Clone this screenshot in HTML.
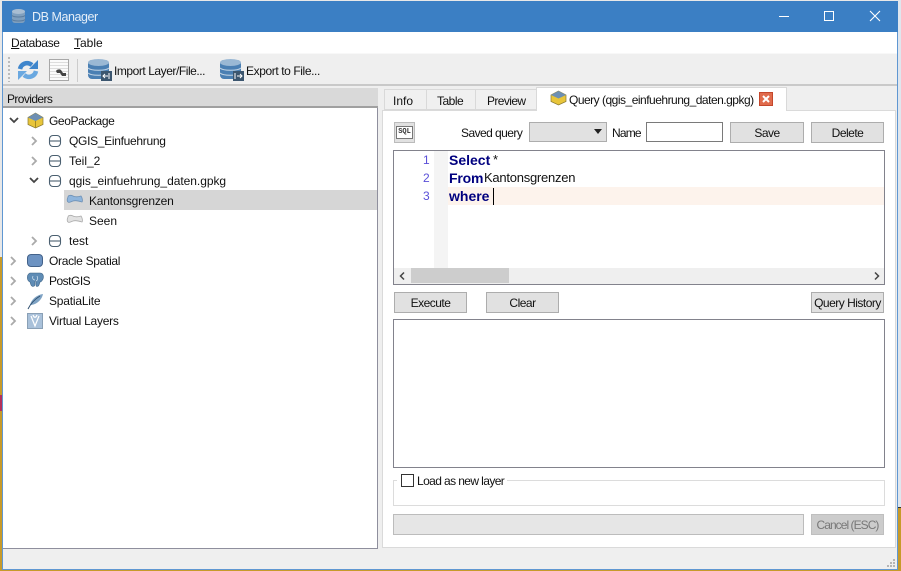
<!DOCTYPE html>
<html><head><meta charset="utf-8">
<style>
html,body{margin:0;padding:0;width:901px;height:571px;overflow:hidden;background:#c79a2a}
*{box-sizing:border-box}
.a{position:absolute}
.t{position:absolute;font:12px/16px "Liberation Sans",sans-serif;color:#111;white-space:nowrap}
.b{position:absolute;background:#e1e1e1;border:1px solid #adadad;font:12px "Liberation Sans",sans-serif;color:#111;text-align:center;white-space:nowrap;letter-spacing:-.5px}
u{text-decoration:underline}
svg{position:absolute;overflow:visible}
</style></head>
<body>
<div class="a" style="left:0;top:0;width:901px;height:257px;background:#e8e8e8"></div>
<div class="a" style="left:0;top:395px;width:2px;height:16px;background:#b5305a"></div>
<div class="a" style="left:898px;top:0;width:3px;height:507px;background:#dfe6ee"></div>
<div class="a" style="left:898px;top:507px;width:3px;height:1px;background:#333"></div>
<!-- window -->
<div class="a" style="left:2px;top:1px;width:896px;height:569px;background:#efefef;border:1px solid #5f97d2;overflow:hidden"></div>
<div class="a" style="left:2px;top:1px;width:896px;height:31px;background:#3b7fc4"></div>
<svg style="left:11px;top:8px" width="16" height="17" viewBox="0 0 16 17"><rect x="1" y="2" width="13" height="13" rx="3" fill="#7f9fbe"/><ellipse cx="7.500" cy="3.500" rx="6.500" ry="2.500" fill="#a8bdd2"/><path d="M1 7.500c2 2 11 2 13 0M1 11.500c2 2 11 2 13 0" stroke="#5b7c9e" fill="none"/></svg>
<div class="t" style="left:32px;top:9px;color:#e6eff8;font-size:12.500px;letter-spacing:-.45px">DB Manager</div>
<div class="a" style="left:779px;top:16px;width:10px;height:1px;background:#fff"></div>
<div class="a" style="left:824px;top:11px;width:10px;height:10px;border:1px solid #fff"></div>
<svg style="left:870px;top:11px" width="10" height="10"><path d="M0 0L10 10M10 0L0 10" stroke="#fff" stroke-width="1.100"/></svg>
<!-- menu -->
<div class="a" style="left:3px;top:32px;width:894px;height:21px;background:#fff"></div>
<div class="a" style="left:3px;top:53px;width:894px;height:33px;background:#efefef;border-top:1px solid #f8f8f8;border-bottom:2px solid #c9c9c9"></div>
<div class="t" style="left:11px;top:35px;letter-spacing:-.35px"><u>D</u>atabase</div>
<div class="t" style="left:74px;top:35px"><u>T</u>able</div>
<!-- toolbar -->
<div class="a" style="left:8px;top:57px;width:2px;height:25px;background-image:linear-gradient(#bbb 50%,transparent 50%);background-size:2px 4px"></div>
<svg style="left:17px;top:59px" width="22" height="22" viewBox="0 0 22 22" fill="none"><path d="M3 10C4 5 10 2 15 6" stroke="#3f86cc" stroke-width="4.500"/><path d="M21 1v9h-9z" fill="#3f86cc"/><path d="M19 12C18 17 12 20 7 16" stroke="#6aa8e0" stroke-width="4.500"/><path d="M1 21v-9h9z" fill="#6aa8e0"/></svg>
<div class="a" style="left:49px;top:59px;width:20px;height:22px;background:#fbfbfb;border:1px solid #a8a8a8;background-image:repeating-linear-gradient(#fbfbfb 0 2px,#ddd 2px 3px)"></div>
<svg style="left:55px;top:68px" width="13" height="11"><path d="M1 3c1-2 4-2 5-1l2 3h3v3H7L5 5H2z" fill="#444"/></svg>
<div class="a" style="left:77px;top:59px;width:1px;height:23px;background:#ccc"></div>
<svg style="left:87px;top:58px" width="26" height="24" viewBox="0 0 26 24"><rect x="1" y="2" width="21" height="19" rx="4" fill="#4a7fb3"/><ellipse cx="11.500" cy="4.500" rx="10.500" ry="3.500" fill="#9ab8d4"/><path d="M1 10c3 3 18 3 21 0M1 15c3 3 18 3 21 0" stroke="#c5d6e6" fill="none"/><rect x="14" y="13" width="11" height="10" fill="#3c566f"/><path d="M16 18h5M18 16l-2 2 2 2M22 15v6" stroke="#fff" fill="none"/></svg>
<div class="t" style="left:114px;top:63px;letter-spacing:-.45px">Import Layer/File...</div>
<svg style="left:219px;top:58px" width="26" height="24" viewBox="0 0 26 24"><rect x="1" y="2" width="21" height="19" rx="4" fill="#4a7fb3"/><ellipse cx="11.500" cy="4.500" rx="10.500" ry="3.500" fill="#9ab8d4"/><path d="M1 10c3 3 18 3 21 0M1 15c3 3 18 3 21 0" stroke="#c5d6e6" fill="none"/><rect x="14" y="13" width="11" height="10" fill="#3c566f"/><path d="M16 15v6M18 18h5M21 16l2 2-2 2" stroke="#fff" fill="none"/></svg>
<div class="t" style="left:246px;top:63px;letter-spacing:-.4px">Export to File...</div>
<!-- Providers -->
<div class="a" style="left:3px;top:88px;width:375px;height:20px;background:#d9d9d9;border-bottom:2px solid #a0a0a0"></div>
<div class="t" style="left:7px;top:91px;letter-spacing:-.6px">Providers</div>
<div class="a" style="left:3px;top:108px;width:375px;height:441px;background:#fff;border-right:1px solid #8f8f9d;border-bottom:1px solid #8f8f9d"></div>
<div class="a" style="left:64px;top:190px;width:313px;height:20px;background:#d6d6d6"></div>
<!-- tree arrows -->
<svg style="left:0;top:0" width="60" height="340" fill="none" stroke-width="1.800">
<path d="M10 118l4 4 4-4M30 178l4 4 4-4" stroke="#444"/>
<path d="M32 137l4 4-4 4M32 157l4 4-4 4M32 237l4 4-4 4M11 257l4 4-4 4M11 277l4 4-4 4M11 297l4 4-4 4M11 317l4 4-4 4" stroke="#aaa"/>
</svg>
<!-- geopackage icon -->
<svg style="left:27px;top:112px" width="17" height="17" viewBox="0 0 17 17"><path d="M8.500 1L16 5.500v7L8.500 16 1 12.500v-7z" fill="#e8c53a" stroke="#8a7a30" stroke-width=".7"/><path d="M1 5.500L8.500 1 16 5.500 8.500 9z" fill="#6d8fb3"/><path d="M8.500 9v7" stroke="#a58b22"/></svg>
<svg style="left:49px;top:135px" width="12" height="112" fill="none" stroke="#4a5f70" stroke-width="1.100"><g><rect x=".5" y=".5" width="11" height="11" rx="3.500"/><path d="M.5 6h11"/></g><g transform="translate(0,20)"><rect x=".5" y=".5" width="11" height="11" rx="3.500"/><path d="M.5 6h11"/></g><g transform="translate(0,40)"><rect x=".5" y=".5" width="11" height="11" rx="3.500"/><path d="M.5 6h11"/></g><g transform="translate(0,100)"><rect x=".5" y=".5" width="11" height="11" rx="3.500"/><path d="M.5 6h11"/></g></svg>
<svg style="left:67px;top:195px" width="16" height="11" viewBox="0 0 16 11"><path d="M1 2c0-2 3-2 5-1s5 1 8 0c1 1 2 5 1 6-3-1-6-2-9-1s-4 2-5 1c-1-1-1-3 0-5z" fill="#8fb5dc" stroke="#6d90b5" stroke-width=".8"/></svg>
<svg style="left:67px;top:215px" width="16" height="11" viewBox="0 0 16 11"><path d="M1 2c0-2 3-2 5-1s5 1 8 0c1 1 2 5 1 6-3-1-6-2-9-1s-4 2-5 1c-1-1-1-3 0-5z" fill="#e2e2e2" stroke="#aaa" stroke-width=".8"/></svg>
<div class="a" style="left:27px;top:254px;width:16px;height:13px;background:#6d93c2;border:1px solid #43628a;border-radius:4px"></div>
<svg style="left:27px;top:273px" width="17" height="16" viewBox="0 0 17 16"><path d="M3 0h10c3 0 4 3 3 6-1 2-2 3-3 3l-1 3c-1 2-3 2-3 0V8H8v3c0 3-3 3-4 1L3 9C0 8-1 2 3 0z" fill="#5f8cb5" stroke="#3f6486" stroke-width=".6"/><path d="M6 3c-1 2 0 4 2 4M10 3c1 2 1 4-1 5" stroke="#cfe0ee" fill="none" stroke-width=".8"/></svg>
<svg style="left:27px;top:293px" width="17" height="17" viewBox="0 0 17 17"><path d="M3 12C4 7 9 2 16 1c-1 5-5 10-12 11z" fill="#7fa3c4"/><path d="M1 16C4 10 8 6 13 3" stroke="#2f4f6f" fill="none"/></svg>
<svg style="left:27px;top:313px" width="16" height="16" viewBox="0 0 16 16"><rect x=".5" y=".5" width="15" height="15" fill="#a9c1da" stroke="#8aa0b6"/><path d="M4 3l4 10 4-10M6 2c1 3 3 3 4 0" stroke="#fff" fill="none" stroke-width="1.200"/></svg>
<div class="t" style="left:49px;top:113px;letter-spacing:-.4px">GeoPackage</div>
<div class="t" style="left:69px;top:133px;letter-spacing:-.3px">QGIS_Einfuehrung</div>
<div class="t" style="left:69px;top:153px">Teil_2</div>
<div class="t" style="left:69px;top:173px;letter-spacing:-.04px">qgis_einfuehrung_daten.gpkg</div>
<div class="t" style="left:89px;top:193px;letter-spacing:-.2px">Kantonsgrenzen</div>
<div class="t" style="left:89px;top:213px">Seen</div>
<div class="t" style="left:69px;top:233px">test</div>
<div class="t" style="left:49px;top:253px;letter-spacing:-.3px">Oracle Spatial</div>
<div class="t" style="left:49px;top:273px;letter-spacing:-.5px">PostGIS</div>
<div class="t" style="left:49px;top:293px;letter-spacing:-.2px">SpatiaLite</div>
<div class="t" style="left:49px;top:313px;letter-spacing:-.25px">Virtual Layers</div>
<!-- tabs -->
<div class="a" style="left:382px;top:110px;width:514px;height:438px;background:#fff;border:1px solid #dadada"></div>
<div class="a" style="left:384px;top:89px;width:43px;height:21px;background:#f0f0f0;border:1px solid #d9d9d9"></div>
<div class="a" style="left:426px;top:89px;width:50px;height:21px;background:#f0f0f0;border:1px solid #d9d9d9"></div>
<div class="a" style="left:475px;top:89px;width:62px;height:21px;background:#f0f0f0;border:1px solid #d9d9d9"></div>
<div class="a" style="left:536px;top:87px;width:251px;height:24px;background:#fff;border:1px solid #d9d9d9;border-bottom:none"></div>
<div class="t" style="left:393px;top:93px">Info</div>
<div class="t" style="left:437px;top:93px;letter-spacing:-.5px">Table</div>
<div class="t" style="left:487px;top:93px;letter-spacing:-.6px">Preview</div>
<svg style="left:550px;top:90px" width="17" height="16" viewBox="0 0 17 16"><path d="M8.500 1L16 5v6.500L8.500 15 1 11.500V5z" fill="#e8c53a" stroke="#8a7a30" stroke-width=".7"/><path d="M1 5l7.500-4L16 5 8.500 8.500z" fill="#6d8fb3"/></svg>
<div class="t" style="left:569px;top:92px;letter-spacing:-.5px">Query (qgis_einfuehrung_daten.gpkg)</div>
<div class="a" style="left:759px;top:92px;width:14px;height:14px;background:#e06b4c;border:1px solid #c4472c"></div>
<svg style="left:759px;top:92px" width="14" height="14"><path d="M4 4l6 6M10 4l-6 6" stroke="#fff" stroke-width="2"/></svg>
<!-- sql row -->
<div class="a" style="left:394px;top:122px;width:21px;height:21px;background:#e1e1e1;border:1px solid #bbb"></div>
<div class="a" style="left:396px;top:126px;width:17px;height:13px;background:#fff;border:1px solid #777;font:bold 7px/11px 'Liberation Mono',monospace;color:#333;text-align:center">SQL</div>
<div class="t" style="left:461px;top:125px;letter-spacing:-.55px">Saved query</div>
<div class="a" style="left:529px;top:122px;width:78px;height:20px;background:#e1e1e1;border:1px solid #adadad"></div>
<svg style="left:593px;top:129px" width="10" height="6"><path d="M1 0h8L5 5z" fill="#222"/></svg>
<div class="t" style="left:612px;top:125px;letter-spacing:-.8px">Name</div>
<div class="a" style="left:646px;top:122px;width:77px;height:20px;background:#fff;border:1px solid #7a7a7a"></div>
<div class="b" style="left:730px;top:122px;width:74px;height:21px;line-height:20px">Save</div>
<div class="b" style="left:811px;top:122px;width:73px;height:21px;line-height:20px">Delete</div>
<!-- editor -->
<div class="a" style="left:393px;top:150px;width:492px;height:135px;background:#fff;border:1px solid #82828c"></div>
<div class="a" style="left:434px;top:151px;width:14px;height:117px;background:#f4f4f4"></div>
<div class="a" style="left:448px;top:187px;width:436px;height:18px;background:#fdf3ec"></div>
<div class="t" style="left:423px;top:151px;color:#5a50d8;line-height:18px">1</div>
<div class="t" style="left:423px;top:169px;color:#5a50d8;line-height:18px">2</div>
<div class="t" style="left:423px;top:187px;color:#5a50d8;line-height:18px">3</div>
<div class="t" style="left:449px;top:151px;line-height:18px;font-size:14px;font-weight:bold;color:#00007f">Select</div>
<div class="t" style="left:493px;top:151px;line-height:18px;font-size:13px">*</div>
<div class="t" style="left:449px;top:169px;line-height:18px;font-size:14px;font-weight:bold;color:#00007f;letter-spacing:-.2px">From</div>
<div class="t" style="left:484px;top:169px;line-height:18px;font-size:13px;letter-spacing:-.25px">Kantonsgrenzen</div>
<div class="t" style="left:449px;top:187px;line-height:18px;font-size:14px;font-weight:bold;color:#00007f">where</div>
<div class="a" style="left:493px;top:188px;width:1px;height:17px;background:#000"></div>
<div class="a" style="left:394px;top:268px;width:490px;height:16px;background:#efefef"></div>
<div class="a" style="left:411px;top:268px;width:98px;height:15px;background:#cdcdcd"></div>
<svg style="left:398px;top:272px" width="485" height="8" fill="none" stroke="#444" stroke-width="1.500"><path d="M6 0.500L2.500 4 6 7.500M477 .5L480.500 4 477 7.500"/></svg>
<!-- buttons -->
<div class="b" style="left:394px;top:292px;width:73px;height:21px;line-height:20px">Execute</div>
<div class="b" style="left:486px;top:292px;width:73px;height:21px;line-height:20px">Clear</div>
<div class="b" style="left:811px;top:292px;width:73px;height:21px;line-height:20px">Query History</div>
<div class="a" style="left:393px;top:319px;width:492px;height:149px;background:#fff;border:1px solid #82828c"></div>
<!-- group -->
<div class="a" style="left:393px;top:480px;width:492px;height:26px;background:#fff;border:1px solid #dcdcdc"></div>
<div class="a" style="left:397px;top:474px;width:110px;height:14px;background:#fff"></div>
<div class="a" style="left:401px;top:474px;width:13px;height:13px;background:#fff;border:1px solid #333"></div>
<div class="t" style="left:417px;top:473px;letter-spacing:-.6px">Load as new layer</div>
<div class="a" style="left:393px;top:514px;width:411px;height:21px;background:#e6e6e6;border:1px solid #bcbcbc"></div>
<div class="b" style="left:811px;top:514px;width:73px;height:21px;line-height:20px;background:#ccc;border-color:#bfbfbf;color:#787878;letter-spacing:-.95px">Cancel (ESC)</div>
<!-- grip -->
<svg style="left:886px;top:558px" width="10" height="10" fill="#b5b5b5"><rect x="7" y="1" width="2" height="2"/><rect x="4" y="4" width="2" height="2"/><rect x="7" y="4" width="2" height="2"/><rect x="1" y="7" width="2" height="2"/><rect x="4" y="7" width="2" height="2"/><rect x="7" y="7" width="2" height="2"/></svg>
</body></html>
